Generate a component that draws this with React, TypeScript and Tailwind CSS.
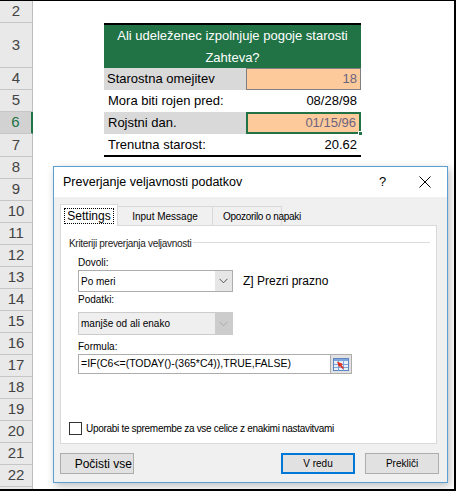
import type { ReactNode } from "react";

const SANS = "font-['Liberation_Sans',Arial,sans-serif]";

function RowHead({ n, active }: { n?: number; active?: boolean }) {
  return (
    <div
      className={
        "flex h-full w-[33px] shrink-0 items-center justify-center border-b border-r text-[15px] " +
        (active
          ? "border-b-[#c6c6c6] border-r-2 border-r-[#217346] bg-[#d2d2d2] text-[#217346]"
          : "border-b-[#c6c6c6] border-r-[#bdbdbd] bg-[#e9e9e9] text-[#444]")
      }
    >
      {n}
    </div>
  );
}

function Row({ n, h, active, children }: { n?: number; h: string; active?: boolean; children?: ReactNode }) {
  return (
    <div className={"flex " + h}>
      <RowHead n={n} active={active} />
      <div className="relative flex flex-1 pl-[71px]">{children}</div>
    </div>
  );
}

function Chevron({ color }: { color: string }) {
  return (
    <svg width="9" height="6" viewBox="0 0 9 6">
      <path d="M0.5 0.8 L4.5 4.8 L8.5 0.8" fill="none" stroke={color} strokeWidth="1" />
    </svg>
  );
}

function RefIcon() {
  return (
    <svg width="16" height="13" viewBox="0 0 16 13">
      <rect x="0.5" y="0.5" width="15" height="12" fill="#e8f0fa" stroke="#5d86c2" />
      <rect x="1" y="1" width="14" height="2" fill="#7fa6dc" />
      <path d="M1 6.5 H15 M1 9.5 H15 M5.5 3 V12.5 M10.5 3 V12.5" stroke="#7fa6dc" strokeWidth="1" />
      <path d="M4 3.5 L10 6 L8.5 7 L11 10 L9.5 11 L7 8 L6 9.5 Z" fill="#e0301e" />
    </svg>
  );
}

function Btn({ children, primary }: { children: ReactNode; primary?: boolean }) {
  return (
    <div
      className={
        "flex h-[21px] w-[74px] items-center justify-center bg-[#e1e1e1] text-[10px] text-black " +
        (primary ? "border-2 border-[#0078d7]" : "border border-[#adadad]")
      }
    >
      {children}
    </div>
  );
}

export default function App() {
  const rows = [8, 9, 10, 11, 12, 13, 14, 15, 16, 17, 18, 19, 20, 21, 22];

  return (
    <div className={"relative h-[491px] w-[456px] overflow-hidden border-b-2 border-r-2 border-t border-black bg-white " + SANS}>
      {/* sheet */}
      <Row n={2} h="h-[22px]" />
      <Row n={3} h="h-[45px]">
        <div className="flex w-[257px] flex-col items-center justify-center border-t-2 border-black bg-[#217346] text-[13px] leading-[22px] text-white">
          <span>Ali udeleženec izpolnjuje pogoje starosti</span>
          <span>Zahteva?</span>
        </div>
      </Row>
      <Row n={4} h="h-[22px]">
        <div className="flex w-[142px] items-center bg-[#d9d9d9] pl-[3px] text-[13px] text-black">Starostna omejitev</div>
        <div className="flex w-[115px] items-center justify-end border border-[#808080] bg-[#fdca9b] pr-[3px] text-[13px] text-[#6b6480]">18</div>
      </Row>
      <Row n={5} h="h-[22px]">
        <div className="flex w-[142px] items-center pl-[4px] text-[13px] text-black">Mora biti rojen pred:</div>
        <div className="flex w-[115px] items-center justify-end pr-[4px] text-[13px] text-black">08/28/98</div>
      </Row>
      <Row n={6} h="h-[22px]" active>
        <div className="flex w-[142px] items-center bg-[#d9d9d9] pl-[4px] text-[13px] text-black">Rojstni dan.</div>
        <div className="relative flex w-[115px] items-center justify-end border-2 border-[#217346] bg-[#fdca9b] pr-[3px] text-[13px] text-[#6b6480]">
          01/15/96
          <span className="absolute -bottom-[4px] -right-[4px] h-[5px] w-[5px] border border-white bg-[#217346]" />
        </div>
      </Row>
      <Row n={7} h="h-[23px]">
        <div className="flex w-[257px] border-b-2 border-black">
          <div className="flex w-[142px] items-center pl-[4px] text-[13px] text-black">Trenutna starost:</div>
          <div className="flex w-[115px] items-center justify-end pr-[4px] text-[13px] text-black">20.62</div>
        </div>
      </Row>
      {rows.map((n) => (
        <Row key={n} n={n} h="h-[22px]" />
      ))}
      <Row h="h-[22px]" />

      {/* data validation dialog */}
      <div className="absolute left-[53px] top-[165px] flex h-[317px] w-[395px] flex-col border border-[#5aa0d2] bg-[#f0f0f0] shadow-[2px_3px_8px_rgba(0,0,0,0.25)]">
        <div className="flex h-[30px] items-center bg-white pl-[9px] text-[12.5px] text-black">
          <span className="flex-1">Preverjanje veljavnosti podatkov</span>
          <span className="w-[14px] text-[13px]">?</span>
          <span className="ml-[26px] mr-[16px] flex">
            <svg width="12" height="12" viewBox="0 0 12 12">
              <path d="M0.5 0.5 L11.5 11.5 M11.5 0.5 L0.5 11.5" stroke="#000" strokeWidth="1" />
            </svg>
          </span>
        </div>

        <div className="flex flex-1 flex-col px-[6px] pt-[7px]">
          {/* tabs */}
          <div className="relative z-10 -mb-px flex h-[22px] items-end">
            <div className="flex h-[22px] w-[58px] items-center justify-center border border-b-0 border-[#d9d9d9] bg-white">
              <span className="border border-dotted border-black px-[2px] text-[12px] leading-[14px]">Settings</span>
            </div>
            <div className="flex h-[20px] w-[95px] items-center justify-center border-b border-r border-t border-[#d9d9d9] text-[10px]">Input Message</div>
            <div className="flex h-[20px] w-[69px] items-center whitespace-nowrap border-b border-r border-t border-[#d9d9d9] pl-[10px] text-[10px] tracking-[-0.3px]">Opozorilo o napaki</div>
          </div>

          <div className="flex h-[219px] w-[377px] flex-col border border-[#d9d9d9] bg-white pl-[8px] pr-[6px] text-black">
            <div className="mt-[12px] flex items-center text-[10px] leading-[12px] tracking-[-0.3px] text-[#222]">
              <span className="pr-[2px]">Kriteriji preverjanja veljavnosti</span>
              <div className="-mt-[4px] h-px flex-1 bg-[#dcdcdc]" />
            </div>

            <div className="pl-[9px]">
              <div className="mt-[7px] text-[10px] leading-[12px]">Dovoli:</div>
              <div className="mt-[1px] flex items-center">
                <div className="flex h-[22px] w-[155px] border border-[#adadad] bg-white">
                  <span className="flex flex-1 items-center pl-[2px] text-[10px]">Po meri</span>
                  <span className="flex w-[17px] items-center justify-center bg-[#e6e6e6]">
                    <Chevron color="#555" />
                  </span>
                </div>
                <span className="ml-[10px] text-[12px]">Z] Prezri prazno</span>
              </div>

              <div className="mt-[2px] text-[10px] leading-[12px]">Podatki:</div>
              <div className="mt-[6px] flex h-[23px] w-[155px] border border-[#cccccc] bg-[#efefef]">
                <span className="flex flex-1 items-center pl-[2px] text-[10px]">manjše od ali enako</span>
                <span className="flex w-[17px] items-center justify-center bg-[#cccccc]">
                  <Chevron color="#a8a8a8" />
                </span>
              </div>

              <div className="mt-[6px] text-[10px] leading-[12px]">Formula:</div>
              <div className="mt-[1px] flex h-[20px]">
                <div className="flex w-[253px] items-center border border-[#adadad] bg-white pl-[2px] text-[10.5px]">
                  =IF(C6&lt;=(TODAY()-(365*C4)),TRUE,FALSE)
                </div>
                <div className="flex w-[21px] items-center justify-center border border-l-0 border-[#adadad] bg-[#e1e1e1]">
                  <RefIcon />
                </div>
              </div>
            </div>

            <div className="mt-[47px] flex items-center">
              <span className="h-[13px] w-[13px] border border-[#333] bg-white" />
              <span className="ml-[4px] text-[10px] tracking-[-0.3px]">Uporabi te spremembe za vse celice z enakimi nastavitvami</span>
            </div>
          </div>

          <div className="mt-[9px] flex">
            <div className="flex h-[21px] w-[74px] items-center justify-end whitespace-nowrap border border-[#adadad] bg-[#e1e1e1] pr-[1px] text-[12px] text-black">Počisti vse</div>
            <div className="ml-auto flex gap-[10px] pr-[2px]">
              <Btn primary>V redu</Btn>
              <Btn>Prekliči</Btn>
            </div>
          </div>
        </div>
      </div>
    </div>
  );
}
